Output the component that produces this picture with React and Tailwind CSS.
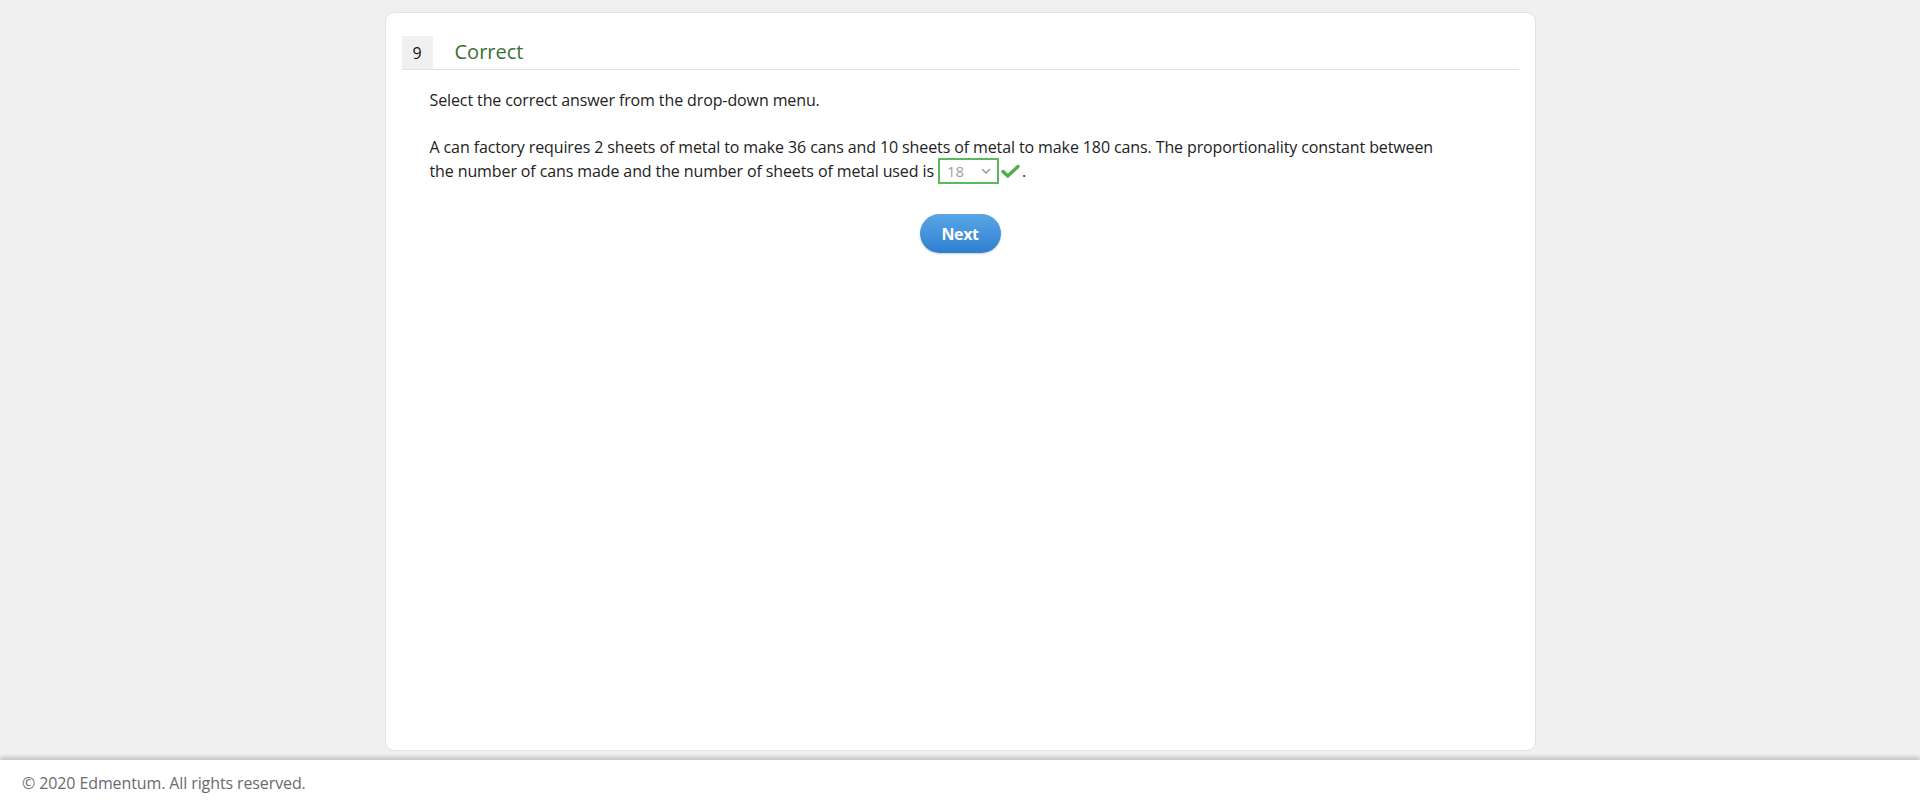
import React from 'react'

function Check() {
  return (
    <svg width="19" height="15" viewBox="0 0 19 15" className="inline-block">
      <path d="M2 7.5 L6.8 12 L17 2.5" fill="none" stroke="#4cae4c" strokeWidth="3.4" strokeLinecap="round" strokeLinejoin="round" />
    </svg>
  )
}

function Chevron() {
  return (
    <svg width="10" height="7" viewBox="0 0 10 7">
      <path d="M1.5 1.5 L5 5 L8.5 1.5" fill="none" stroke="#9a9a9a" strokeWidth="1.5" strokeLinecap="round" strokeLinejoin="round" />
    </svg>
  )
}

export default function App() {
  return (
    <div className="h-[805px] flex flex-col bg-[#f0f0f0] text-[#222] overflow-hidden tracking-[-0.11px]" style={{ fontFamily: '"Open Sans", "Liberation Sans", sans-serif' }}>
      <main className="flex-1 pt-[12px]">
        <div className="w-[1151px] h-[739px] mx-auto bg-white rounded-[9px] border border-[#e2e2e2] pt-[23px] pl-[16px] pr-[16px]">
          <div className="flex items-center h-[34px] border-b border-[#e0e0e0]">
            <div className="w-[31px] h-[33px] bg-[#f0f0f0] flex items-center justify-center text-[16px] text-[#111]">9</div>
            <h2 className="ml-[22px] text-[20px] text-[#3a7236] leading-none pb-[1px] tracking-normal">Correct</h2>
          </div>
          <div className="pl-[28px] max-w-[1050px] text-[16px] leading-[24.5px]">
            <p className="mt-[18px]">Select the correct answer from the drop-down menu.</p>
            <p className="mt-[22px]">
              A can factory requires 2 sheets of metal to make 36 cans and 10 sheets of metal to make 180 cans. The proportionality constant between the number of cans made and the number of sheets of metal used is{' '}
              <span className="inline-flex items-center justify-between align-middle w-[61px] h-[26px] border-2 border-[#5cb85c] pl-[7px] pr-[6px] -mt-[3px] text-[15px] text-[#a0a0a0] leading-none">
                <span>18</span>
                <Chevron />
              </span>
              <span className="inline-block align-middle ml-[2px] -mt-[6px]"><Check /></span>
              <span className="ml-[2px]">.</span>
            </p>
          </div>
          <div className="flex justify-center mt-[30px]">
            <button type="button" className="w-[81px] h-[39px] rounded-full bg-gradient-to-b from-[#58a6e6] to-[#2f7fd1] text-white font-bold text-[16px] shadow-[0_1px_2px_rgba(0,0,0,0.2)] tracking-[-0.4px]">
              Next
            </button>
          </div>
        </div>
      </main>
      <footer className="h-[45px] bg-white shadow-[0_-3px_4px_rgba(0,0,0,0.18)] flex items-center pl-[22px] text-[16px] text-[#6b6b6b] shrink-0">
        © 2020 Edmentum. All rights reserved.
      </footer>
    </div>
  )
}
